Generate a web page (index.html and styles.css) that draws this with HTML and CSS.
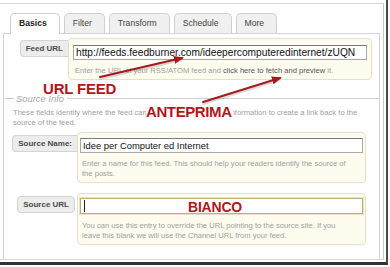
FILE: index.html
```html
<!DOCTYPE html>
<html lang="en">
<head>
  <meta charset="UTF-8" />
  <meta name="viewport" content="width=device-width, initial-scale=1.0" />
  <title>Feed settings</title>
  <link rel="stylesheet" href="styles.css">
</head>
<body>
  <div class="shot">
    <div class="window">
      <div class="tabs">
        <div class="tab active">Basics</div>
        <div class="tab">Filter</div>
        <div class="tab">Transform</div>
        <div class="tab">Schedule</div>
        <div class="tab">More</div>
      </div>

      <div class="panel">
        <div class="field field-feed">
          <div class="label-col"><span class="label">Feed URL</span></div>
          <div class="box">
            <div class="input">http://feeds.feedburner.com/ideepercomputeredinternet/zUQN</div>
            <p class="hint">Enter the URL of your RSS/ATOM feed and <a>click here to fetch and preview</a> it.</p>
          </div>
        </div>

        <div class="section-title"><span>Source Info</span></div>
        <p class="desc">These fields identify where the feed came from. We will use this information to create a link back to the<br>source of the feed.</p>

        <div class="field field-name">
          <div class="label-col"><span class="label">Source Name:</span></div>
          <div class="box">
            <div class="input">Idee per Computer ed Internet</div>
            <p class="hint">Enter a name for this feed. This should help your readers identify the source of<br>the posts.</p>
          </div>
        </div>

        <div class="field field-url">
          <div class="label-col"><span class="label">Source URL</span></div>
          <div class="box">
            <div class="input focus"><span class="caret"></span></div>
            <p class="hint">You can use this entry to override the URL pointing to the source site. If you<br>leave this blank we will use the Channel URL from your feed.</p>
          </div>
        </div>
      </div>
    </div>

    <!-- annotations pasted over the screenshot -->
    <div class="note note-feed">URL FEED</div>
    <div class="note note-preview">ANTEPRIMA</div>
    <div class="note note-blank">BIANCO</div>

    <svg class="arrows" width="390" height="267" viewBox="0 0 390 267">
      <defs>
        <marker id="head" markerWidth="5" markerHeight="4" refX="4" refY="2" orient="auto" markerUnits="strokeWidth">
          <path d="M0,0 L5,2 L0,4 z" fill="#a3191c"/>
        </marker>
      </defs>
      <g stroke="#999" stroke-width="2" stroke-linecap="round" opacity="0.35">
        <line x1="100" y1="79" x2="182" y2="60"/>
        <line x1="203" y1="104" x2="280" y2="80"/>
      </g>
      <g stroke="#a3191c" stroke-width="2" stroke-linecap="round" fill="none">
        <line x1="100" y1="77" x2="182" y2="58" marker-end="url(#head)"/>
        <line x1="203" y1="102" x2="280" y2="78" marker-end="url(#head)"/>
      </g>
    </svg>
  </div>
</body>
</html>
```

FILE: styles.css
```css
* {
  box-sizing: border-box;
  margin: 0;
  padding: 0;
}

body {
  font-family: "Liberation Sans", Arial, sans-serif;
  background: #fff;
  color: #333;
}

.shot {
  position: relative;
  width: 388px;
  height: 265px;
  border-right: 2px solid #4a4a4a;
  border-bottom: 3px solid #333;
  overflow: hidden;
}

.window {
  display: flex;
  flex-direction: column;
  width: 384px;
  height: 257px;
  margin-top: 3px;
  padding: 9px 0 0 3px;
  border-top: 1px solid #d6d6d6;
  border-right: 1px solid #c8c8c8;
  border-bottom: 1px solid #d6d6d6;
}

/* tabs */
.tabs {
  display: flex;
  gap: 4px;
  height: 20px;
  margin-left: 7px;
  position: relative;
  z-index: 1;
}

.tab {
  height: 20px;
  padding: 0 12px 0 8px;
  border: 1px solid #cfcfcf;
  border-bottom: none;
  border-radius: 5px 5px 0 0;
  background: #f0f0f0;
  font-size: 8.6px;
  line-height: 19px;
  color: #444;
}

.tab.active {
  height: 21px;
  background: #fff;
  font-weight: bold;
  color: #222;
}

.panel {
  flex: 1;
  margin-right: 3px;
  padding-top: 4px;
  border: 1px solid #d4d4d4;
  border-bottom: none;
}

/* form rows */
.field {
  display: flex;
  align-items: flex-start;
}

.label-col {
  display: flex;
  justify-content: flex-end;
  width: 73px;
  padding-top: 3px;
}

.field-feed .label-col {
  width: 64px;
  padding-top: 2px;
}

.label {
  height: 17px;
  padding: 0 5px;
  border: 1px solid #d4d4d4;
  border-right: none;
  border-radius: 4px 0 0 4px;
  background: #ececec;
  font-size: 8px;
  font-weight: bold;
  line-height: 15px;
  color: #4a4a4a;
  white-space: nowrap;
}

.field-url .label {
  margin-right: 2px;
  border-right: 1px solid #d4d4d4;
  border-radius: 4px;
}

.box {
  flex: 1;
  margin-right: 13px;
  padding: 5px 2px 3px;
  background: #fdfcef;
  border: 1px solid #e5e1c8;
  border-radius: 4px;
}

.field-feed .box {
  margin-right: 7px;
  padding: 6px 4px 3px;
}

.field-name {
  margin-top: 4px;
}

.field-url {
  margin-top: 10px;
}

.field-url .box {
  padding-top: 4px;
}

.input {
  height: 15px;
  padding: 0 2px;
  background: #fff;
  border: 1px solid #a8a8a8;
  border-top-color: #7a7a7a;
  font-size: 9.4px;
  line-height: 13px;
  color: #111;
  white-space: nowrap;
  overflow: hidden;
}

.field-feed .input {
  font-size: 10.2px;
}

.input.focus {
  height: 16px;
  padding: 1px 3px;
  border-color: #c2ac78;
  box-shadow: 0 0 0 1px #ebe2c4;
}

.caret {
  display: block;
  width: 1px;
  height: 12px;
  background: #222;
}

.hint {
  margin-top: 6px;
  padding-left: 2px;
  font-size: 7.6px;
  line-height: 10px;
  color: #a0a0a0;
}

.field-url .hint {
  margin-top: 7px;
}

.hint a {
  color: #555;
  text-decoration: none;
}

/* source info */
.section-title {
  display: flex;
  align-items: center;
  height: 12px;
  margin-top: 12px;
  margin-left: 1px;
  font-size: 9.4px;
  font-style: italic;
  color: #a8a8a8;
}

.section-title::before {
  content: "";
  width: 9px;
  margin-right: 2px;
  border-top: 1px solid #d0d0d0;
}

.section-title::after {
  content: "";
  flex: 1;
  margin-left: 3px;
  border-top: 1px solid #d0d0d0;
}

.desc {
  margin-top: 4px;
  padding-left: 9px;
  font-size: 7.6px;
  line-height: 10px;
  color: #a0a0a0;
}

/* red notes */
.note {
  position: absolute;
  font-size: 15px;
  font-weight: bold;
  line-height: 1;
  letter-spacing: -0.2px;
  color: #b3161b;
}

.note-feed {
  left: 43px;
  top: 81px;
}

.note-preview {
  left: 146px;
  top: 104px;
  padding-right: 1px;
  letter-spacing: -0.4px;
  background: #fff;
}

.note-blank {
  left: 188px;
  top: 200px;
  font-size: 14px;
}

.arrows {
  position: absolute;
  left: 0;
  top: 0;
  pointer-events: none;
}
```
